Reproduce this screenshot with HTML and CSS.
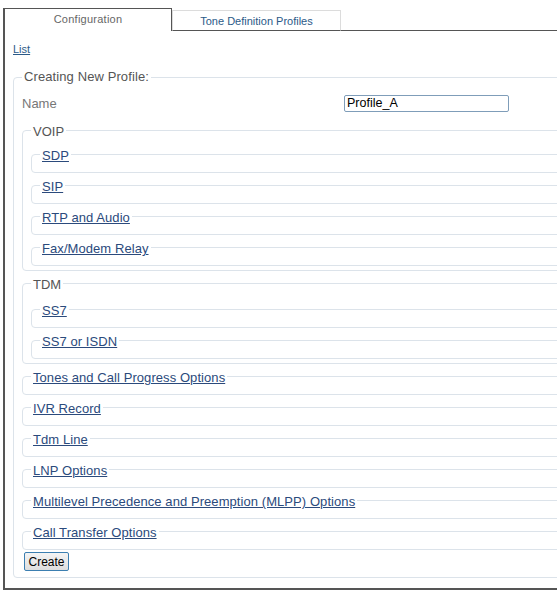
FILE: index.html
```html
<!DOCTYPE html>
<html lang="en">
<head>
    <meta charset="UTF-8">
    <meta name="viewport" content="width=device-width, initial-scale=1.0">
    <title>Creating New Profile</title>
    <link rel="stylesheet" href="styles.css">
</head>
<body>
    <div class="page">
        <div class="tabs">
            <div class="tab active">Configuration</div>
            <div class="tab">Tone Definition Profiles</div>
            <div class="tab-rest"></div>
        </div>
        <div class="panel">
            <a href="#" class="list-link">List</a>
            <form id="profileForm">
                <fieldset class="box main">
                    <legend>Creating New Profile:</legend>
                    <div class="name-row">
                        <label for="profileName">Name</label>
                        <input type="text" id="profileName" value="Profile_A">
                    </div>

                    <fieldset class="box group">
                        <legend>VOIP</legend>
                        <fieldset class="box item"><legend><a href="#">SDP</a></legend></fieldset>
                        <fieldset class="box item"><legend><a href="#">SIP</a></legend></fieldset>
                        <fieldset class="box item"><legend><a href="#">RTP and Audio</a></legend></fieldset>
                        <fieldset class="box item"><legend><a href="#">Fax/Modem Relay</a></legend></fieldset>
                    </fieldset>

                    <fieldset class="box group tdm">
                        <legend>TDM</legend>
                        <fieldset class="box item"><legend><a href="#">SS7</a></legend></fieldset>
                        <fieldset class="box item"><legend><a href="#">SS7 or ISDN</a></legend></fieldset>
                    </fieldset>

                    <fieldset class="box item"><legend><a href="#">Tones and Call Progress Options</a></legend></fieldset>
                    <fieldset class="box item"><legend><a href="#">IVR Record</a></legend></fieldset>
                    <fieldset class="box item"><legend><a href="#">Tdm Line</a></legend></fieldset>
                    <fieldset class="box item"><legend><a href="#">LNP Options</a></legend></fieldset>
                    <fieldset class="box item"><legend><a href="#">Multilevel Precedence and Preemption (MLPP) Options</a></legend></fieldset>
                    <fieldset class="box item"><legend><a href="#">Call Transfer Options</a></legend></fieldset>

                    <button type="submit" class="create-btn">Create</button>
                </fieldset>
            </form>
        </div>
    </div>
</body>
</html>
```

FILE: styles.css
```css
* {
    box-sizing: border-box;
}

body {
    margin: 0;
    font-family: "Liberation Sans", Arial, sans-serif;
    background: #fff;
    overflow: hidden;
}

.page {
    width: 700px;
    margin: 8px 0 0 3px;
}

/* tabs */
.tabs {
    display: flex;
    align-items: flex-end;
    height: 23px;
}

.tab {
    width: 169px;
    height: 21px;
    font-size: 11px;
    line-height: 20px;
    text-align: center;
    color: #2b5a88;
    border: 1px solid #dcdcdc;
    border-bottom: 1px solid #555;
}

.tab.active {
    height: 23px;
    line-height: 21px;
    color: #666;
    letter-spacing: 0.25px;
    border: 1px solid #555;
    border-left-width: 2px;
    border-bottom: none;
}

.tab-rest {
    flex: 1;
    border-bottom: 1px solid #555;
}

.panel {
    border-left: 2px solid #555;
    border-bottom: 2px solid #555;
    padding: 8px 0 7px 8px;
}

.list-link {
    display: inline-block;
    font-size: 11px;
    color: #2b5a88;
}

/* fieldsets */
.box {
    margin: 0 0 3px;
    border: 1px solid #dce3ea;
    border-radius: 4px;
    min-width: 0;
}

.box legend {
    padding: 3px 2px 0;
    font-size: 13px;
    line-height: 15px;
    color: #555;
}

.box legend a {
    color: #2b4a7c;
    letter-spacing: 0.07px;
}

.main {
    margin-top: 11px;
    padding: 0 8px 6px;
}

.main > legend {
    padding: 0 2px;
    line-height: 18px;
    letter-spacing: 0.1px;
}

.name-row {
    display: flex;
    align-items: center;
    height: 26px;
    margin: 4px 0 5px;
}

.name-row label {
    width: 322px;
    font-size: 13px;
    color: #777;
}

.name-row input {
    width: 165px;
    height: 17px;
    padding: 0 2px;
    font-family: "Liberation Sans", Arial, sans-serif;
    font-size: 12.5px;
    color: #000;
    border: 1px solid #7f9db9;
    border-radius: 2px;
}

.group {
    padding: 6px 8px 2px;
}

.group.tdm {
    padding-top: 8px;
}

.item {
    padding: 0 8px 9px;
}

.item:last-of-type {
    margin-bottom: 2px;
}

.create-btn {
    display: block;
    width: 45px;
    height: 19px;
    padding: 0;
    margin: 0 0 0 2px;
    font-family: "Liberation Sans", Arial, sans-serif;
    font-size: 12px;
    color: #000;
    background: linear-gradient(#f4f4f4, #dedede);
    border: 1px solid #3c7fb1;
    border-radius: 2px;
}
```
